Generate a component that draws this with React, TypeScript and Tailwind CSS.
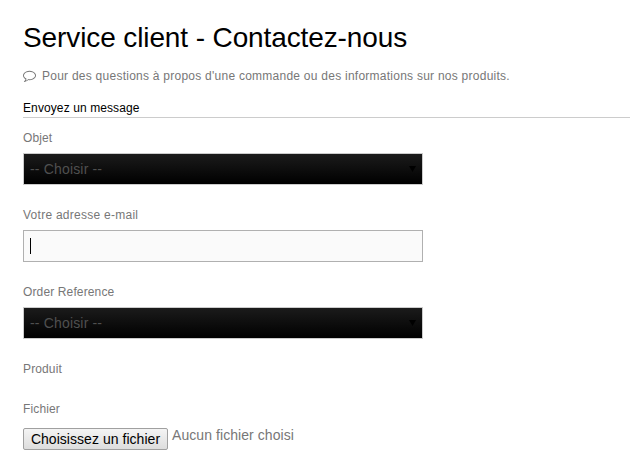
import React, { useState } from 'react';

const CommentIcon: React.FC = () => (
  <svg className="relative -top-px block w-[13px] h-[13px] mr-[6px]" viewBox="0 0 1792 1792" fill="currentColor">
    <path d="M896 384q-204 0-381.500 69.500t-282 187.500-104.500 255q0 112 71.500 213.500t201.500 175.500l87 50-27 96q-24 91-70 172 152-63 275-171l43-38 57 6q69 8 130 8 204 0 381.500-69.500t282-187.500 104.500-255-104.500-255-282-187.500-381.500-69.500zM1792 896q0 174-120 321.500t-326 233-450 85.500q-70 0-145-8-198 175-460 242-49 14-114 22h-5q-15 0-27-10.500t-16-27.500v-1q-3-4-.5-12t2-10 4.500-9.500l6-9 7-8.500 8-9q7-8 31-34.500t34.500-38 31-39.500 32.500-51 27-59 26-76q-157-89-247.500-220t-90.500-281q0-174 120-321.500t326-233 450-85.500 450 85.500 326 233 120 321.500z" />
  </svg>
);

const Label: React.FC<{ htmlFor?: string; className?: string; children: React.ReactNode }> = ({
  htmlFor,
  className = '',
  children,
}) => (
  <label htmlFor={htmlFor} className={`block h-[15px] text-[12px] leading-[15px] text-[#777777] ${className}`}>
    {children}
  </label>
);

const SelectField: React.FC<{ id: string; label: string }> = ({ id, label }) => (
  <div className="mb-[23px]">
    <Label htmlFor={id} className="tracking-[0.13px]">{label}</Label>
    <div className="relative mt-[7px] w-[400px]">
      <select
        id={id}
        className="block w-full h-8 appearance-none rounded-none border border-[#cccccc] bg-[linear-gradient(#1b1b1b,#000000)] pl-[6px] text-[14px] leading-[20px] tracking-[0.17px] text-[#505050] outline-none"
      >
        <option>-- Choisir --</option>
      </select>
      <svg className="absolute right-[7px] top-[13px] w-[7px] h-[6px]" viewBox="0 0 7 6">
        <path d="M0 0h7L3.500 6z" fill="#000000" />
      </svg>
    </div>
  </div>
);

const App: React.FC = () => {
  const [email, setEmail] = useState('');

  return (
    <div className="min-h-[464px] overflow-hidden bg-white pl-[23px] pt-[21px] font-['Liberation_Sans',Arial,sans-serif]">
      <h1 className="h-[34px] whitespace-nowrap text-[28px] leading-[34px] tracking-[-0.11px] text-black">
        Service client - Contactez-nous
      </h1>

      <p className="mt-[13px] flex h-4 items-center whitespace-nowrap text-[12px] leading-4 tracking-[0.25px] text-[#777777]">
        <CommentIcon />
        Pour des questions à propos d'une commande ou des informations sur nos produits.
      </p>

      <form>
        <h3 className="mt-[15px] mb-[13px] h-[19px] border-b border-[#cccccc] text-[12px] leading-[18px] tracking-[0.1px] text-black">
          Envoyez un message
        </h3>

        <SelectField id="objet" label="Objet" />

        <div className="mb-[23px]">
          <Label htmlFor="email" className="tracking-[0.26px]">Votre adresse e-mail</Label>
          <div className="mt-[7px] flex h-8 w-[400px] items-center border border-[#b0b0b0] bg-[#fafafa] pl-[6px]">
            {/* caret of the focused field */}
            <span className="h-4 w-px bg-black" />
            <input
              id="email"
              type="text"
              value={email}
              onChange={(e) => setEmail(e.target.value)}
              className="h-full flex-1 bg-transparent text-[14px] text-[#777777] outline-none"
            />
          </div>
        </div>

        <SelectField id="order" label="Order Reference" />

        <Label className="tracking-[0.13px]">Produit</Label>

        <div className="mt-[25px]">
          <Label className="tracking-[0.13px]">Fichier</Label>
          <div className="mt-[11px] flex items-start">
            <button
              type="button"
              className="h-[22px] w-[145px] whitespace-nowrap rounded-[2px] border border-[#a0a0a0] bg-[linear-gradient(#f4f4f4,#dddddd)] text-center text-[14px] leading-5 tracking-[0.04px] text-black"
            >
              Choisissez un fichier
            </button>
            <span className="ml-1 text-[14px] leading-[15px] tracking-[0.07px] text-[#777777]">Aucun fichier choisi</span>
          </div>
        </div>
      </form>
    </div>
  );
};

export default App;
